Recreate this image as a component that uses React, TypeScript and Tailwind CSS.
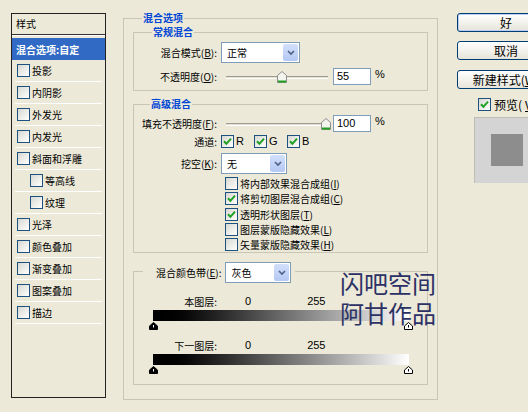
import React from 'react';

const U = ({ c }: { c: string }) => <span className="underline">{c}</span>;

function Check({ on }: { on?: boolean }) {
  return (
    <span className="flex w-[13px] h-[13px] shrink-0 items-center justify-center border border-[#1c5180] bg-linear-to-br from-[#d8d8d2] to-white">
      {on && (
        <svg width="9" height="9" viewBox="0 0 9 9">
          <path d="M1 4.2 L3.4 6.8 L8 1.6" fill="none" stroke="#21a121" strokeWidth="2" />
        </svg>
      )}
    </span>
  );
}

function Select({ value, w }: { value: string; w: string }) {
  return (
    <div className={`flex h-[21px] ${w} border border-[#7f9db9] bg-white`}>
      <span className="flex-1 pl-[5px] pt-[3px] text-[10px] leading-[14px]">{value}</span>
      <span className="m-[1px] flex w-[15px] items-center justify-center rounded-[2px] bg-linear-to-b from-[#d3e0fb] to-[#b4c8f3]">
        <svg width="8" height="6" viewBox="0 0 8 6">
          <path d="M1 1 L4 4 L7 1" fill="none" stroke="#4d6185" strokeWidth="1.6" />
        </svg>
      </span>
    </div>
  );
}

function Thumb() {
  return (
    <svg width="10" height="12" viewBox="0 0 10 12">
      <path d="M5 0.5 L9.5 4.5 V11.5 H0.5 V4.5 Z" fill="#f4f4ef" stroke="#8c8c8c" />
      <path d="M1 10.5 H9" stroke="#21a121" strokeWidth="2" />
    </svg>
  );
}

function Slider({ value }: { value: number }) {
  return (
    <div className="relative ml-[3px] h-[17px] w-[106px]">
      <div className="absolute left-[2px] right-[2px] top-[8px] h-[3px] border-t border-[#9d9d92] border-b border-b-white bg-[#e2dfd1]" />
      <div className="absolute top-[3px]" style={{ left: `${value * 0.97}px` }}>
        <Thumb />
      </div>
    </div>
  );
}

function Num({ v }: { v: string }) {
  return (
    <div className="flex items-center">
      <span className="ml-[3px] h-[17px] w-[38px] border border-[#7f9db9] bg-white pl-[3px] font-['Liberation_Sans',sans-serif] text-[11px] leading-[15px]">
        {v}
      </span>
      <span className="ml-[4px] -mt-[4px] font-['Liberation_Sans',sans-serif] text-[11px]">%</span>
    </div>
  );
}

function Label({ children }: { children: React.ReactNode }) {
  return <div className="flex w-[87px] shrink-0 justify-end whitespace-nowrap pr-[4px] text-[10px]">{children}</div>;
}

function Marker({ dark }: { dark?: boolean }) {
  return (
    <svg width="9" height="8" viewBox="0 0 9 8">
      <path d="M4.5 0.5 L8.5 4 V7.5 H0.5 V4 Z" fill={dark ? '#000' : '#fff'} stroke="#000" />
      <path d="M4.5 3 V5.5" stroke={dark ? '#fff' : '#000'} />
    </svg>
  );
}

function Band({ label }: { label: string }) {
  return (
    <>
      <div className="flex h-[12px] items-center">
        <Label>{label}</Label>
        <span className="ml-[24px] font-['Liberation_Sans',sans-serif] text-[11px]">0</span>
        <span className="ml-[56px] font-['Liberation_Sans',sans-serif] text-[11px]">255</span>
      </div>
      <div className="ml-[19px] mt-[3px] h-[11px] w-[256px] bg-linear-to-r from-black via-[#6a6a6a] to-white" />
      <div className="ml-[15px] mt-[1px] flex h-[8px] w-[264px] justify-between">
        <Marker dark />
        <Marker />
      </div>
    </>
  );
}

const items = [
  { t: '投影' },
  { t: '内阴影' },
  { t: '外发光' },
  { t: '内发光' },
  { t: '斜面和浮雕' },
  { t: '等高线', sub: true },
  { t: '纹理', sub: true },
  { t: '光泽' },
  { t: '颜色叠加' },
  { t: '渐变叠加' },
  { t: '图案叠加' },
  { t: '描边' },
];

const title = 'absolute -top-[8px] h-[14px] bg-[#ece9d8] px-[1px] text-[10px] font-bold leading-[14px] text-[#0046d5]';

export default function App() {
  return (
    <div className="relative flex h-[412px] w-[528px] items-start overflow-hidden bg-[#ece9d8] font-['Noto_Sans_CJK_SC',sans-serif] text-black">
      {/* style list */}
      <div className="ml-[11px] mt-[13px] h-[385px] w-[95px] shrink-0 border border-[#222]">
        <div className="h-[20px] pl-[4px] pt-[3px] text-[10px] leading-[14px]">样式</div>
        <div className="h-[2px] border-t border-[#333] border-b border-b-white" />
        <div className="mt-[2px] flex h-[22px] items-center bg-[#316ac5] pl-[4px] text-[10px] font-bold text-white">混合选项:自定</div>
        {items.map(it => (
          <div key={it.t} className="mx-[3px] flex h-[22px] items-center gap-[2px] border-b border-white">
            <span className={it.sub ? 'ml-[15px]' : 'ml-[2px]'}>
              <Check />
            </span>
            <span className="text-[10px]">{it.t}</span>
          </div>
        ))}
      </div>

      {/* blending options */}
      <div className="relative ml-[17px] mt-[18px] h-[382px] w-[315px] shrink-0 border border-[#c9c6b6]">
        <span className={`${title} left-[18px]`}>混合选项</span>

        <div className="relative ml-[9px] mt-[13px] h-[59px] w-[295px] border border-[#c9c6b6]">
          <span className={`${title} left-[18px]`}>常规混合</span>
          <div className="mt-[9px] flex items-center">
            <Label>
              混合模式(<U c="B" />):
            </Label>
            <Select value="正常" w="w-[79px]" />
          </div>
          <div className="mt-[5px] flex h-[17px] items-center">
            <Label>
              不透明度(<U c="O" />):
            </Label>
            <Slider value={55} />
            <Num v="55" />
          </div>
        </div>

        <div className="relative ml-[9px] mt-[13px] h-[149px] w-[295px] border border-[#c9c6b6]">
          <span className={`${title} left-[16px]`}>高级混合</span>
          <div className="mt-[10px] flex h-[17px] items-center">
            <Label>
              填充不透明度(<U c="F" />):
            </Label>
            <Slider value={100} />
            <Num v="100" />
          </div>
          <div className="mt-[3px] flex h-[13px] items-center">
            <Label>通道:</Label>
            {['R', 'G', 'B'].map(c => (
              <div key={c} className="flex w-[33px] items-center gap-[2px]">
                <Check on />
                <span className="font-['Liberation_Sans',sans-serif] text-[11px]">{c}</span>
              </div>
            ))}
          </div>
          <div className="mt-[5px] flex items-center">
            <Label>
              挖空(<U c="K" />):
            </Label>
            <Select value="无" w="w-[66px]" />
          </div>
          <div className="ml-[91px] mt-[2px] flex flex-col">
            {[
              { t: '将内部效果混合成组', k: 'I', on: false },
              { t: '将剪切图层混合成组', k: 'C', on: true },
              { t: '透明形状图层', k: 'T', on: true },
              { t: '图层蒙版隐藏效果', k: 'L', on: false },
              { t: '矢量蒙版隐藏效果', k: 'H', on: false },
            ].map(r => (
              <div key={r.k} className="flex h-[15.3px] items-center gap-[2px] text-[10px]">
                <Check on={r.on} />
                <span className="whitespace-nowrap">
                  {r.t}(<U c={r.k} />)
                </span>
              </div>
            ))}
          </div>
        </div>

        <div className="relative ml-[9px] mt-[18px] h-[114px] w-[295px] border border-[#c9c6b6]">
          <div className="absolute -top-[10px] left-[9px] flex items-center bg-[#ece9d8] pl-[13px] pr-[4px]">
            <span className="pr-[4px] text-[10px]">
              混合颜色带(<U c="E" />):
            </span>
            <Select value="灰色" w="w-[66px]" />
          </div>
          <div className="mt-[23px]" />
          <Band label="本图层:" />
          <div className="mt-[9px]" />
          <Band label="下一图层:" />
        </div>
      </div>

      {/* buttons */}
      <div className="ml-[19px] mt-[13px] flex w-[100px] shrink-0 flex-col">
        <button className="h-[19px] w-[98px] rounded-[3px] border border-[#003c74] bg-linear-to-b from-white to-[#e6e4da] text-[12px] leading-[15px] shadow-[inset_0_0_0_1px_#b9cdf5]">好</button>
        <button className="mt-[9px] h-[19px] w-[98px] rounded-[3px] border border-[#003c74] bg-linear-to-b from-white to-[#e6e4da] text-[12px] leading-[15px]">取消</button>
        <button className="mt-[10px] h-[19px] w-[98px] whitespace-nowrap rounded-[3px] border border-[#003c74] bg-linear-to-b from-white to-[#e6e4da] text-[12px] leading-[15px]">
          新建样式(<U c="W" />)
        </button>
        <div className="ml-[21px] mt-[9px] flex h-[13px] items-center gap-[3px] whitespace-nowrap text-[12px]">
          <Check on />
          预览(<U c="V" />)
        </div>
        <div className="ml-[17px] mt-[6px] h-[66px] w-[70px] border-l border-t border-[#bdbdb3] bg-[#d4d4d4] pl-[16px] pt-[16px]">
          <div className="h-[32px] w-[32px] bg-[#8d8d8d]" />
        </div>
      </div>

      {/* watermark */}
      <div className="absolute left-[340px] top-[268px] text-[24px] leading-[30px] text-[#2b3165]">
        <div>闪吧空间</div>
        <div>阿甘作品</div>
      </div>
    </div>
  );
}
